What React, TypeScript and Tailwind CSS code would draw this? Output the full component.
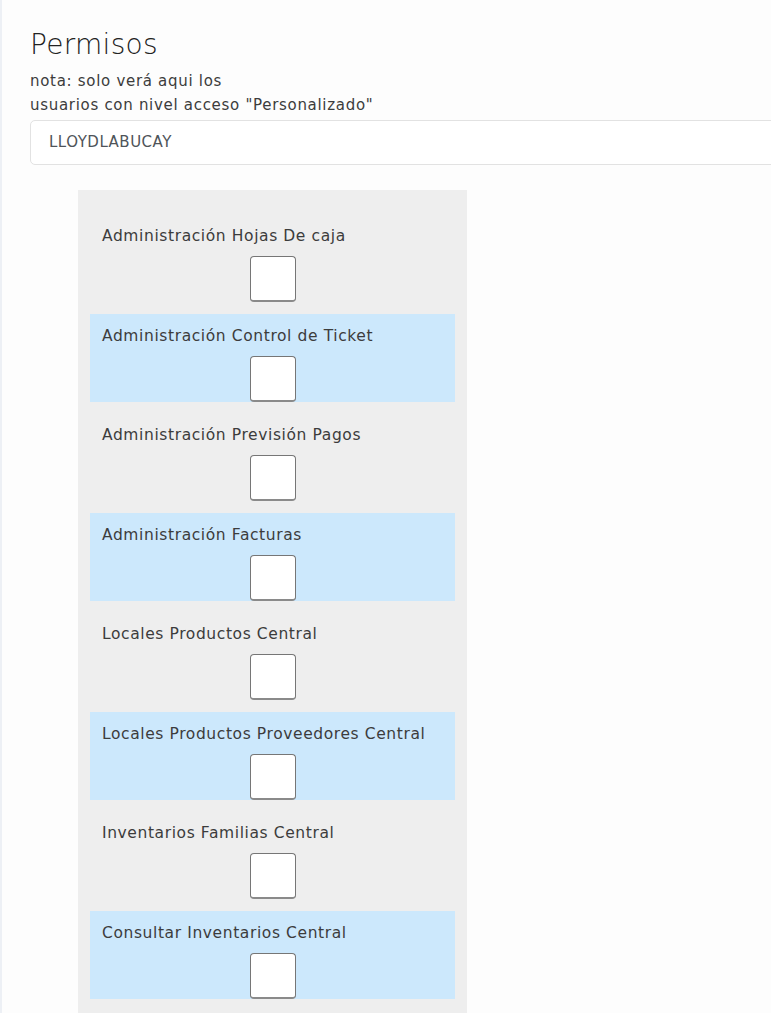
import React from "react";

const permisos = [
  "Administración Hojas De caja",
  "Administración Control de Ticket",
  "Administración Previsión Pagos",
  "Administración Facturas",
  "Locales Productos Central",
  "Locales Productos Proveedores Central",
  "Inventarios Familias Central",
  "Consultar Inventarios Central",
];

export default function App() {
  return (
    <div className="min-h-screen bg-[#fdfdfd] border-l-2 border-[#edf0f5] overflow-hidden font-['DejaVu_Sans',sans-serif] text-[#212529]">
      <div className="pl-[28px] pt-[27px]">
        <h1 className="text-[28px] leading-[36px] font-light tracking-[0.3px] text-[#222]">Permisos</h1>
        <p className="mt-[6px] text-[15px] leading-[24px] tracking-[0.7px] text-[#3c3c3c]">
          nota: solo verá aqui los
          <br />
          usuarios con nivel acceso "Personalizado"
        </p>
        <div className="mt-[3px] w-[800px] h-[45px] border border-[#e2e2e2] rounded-[5px] bg-white flex items-center pl-[18px] text-[15px] tracking-[0.5px] text-[#4f5459]">
          LLOYDLABUCAY
        </div>
        <div className="mt-[25px] ml-[48px] w-[389px] bg-[#eeeeee] pt-[24px] pb-[20px] px-[12px] flex flex-col gap-[11.5px]">
          {permisos.map((p, i) => (
            <div
              key={p}
              className={
                "h-[88px] pt-[10px] px-[12px] flex flex-col " +
                (i % 2 === 1 ? "bg-[#cce8fc]" : "")
              }
            >
              <label className="text-[15.5px] leading-[24px] tracking-[0.6px] text-[#3c3c3c]">{p}</label>
              <div className="mt-[8px] self-center w-[46px] h-[46px] bg-white border border-[#767676] border-b-[2px] border-b-[#8a8a8a] rounded-[4px]" />
            </div>
          ))}
        </div>
      </div>
    </div>
  );
}
